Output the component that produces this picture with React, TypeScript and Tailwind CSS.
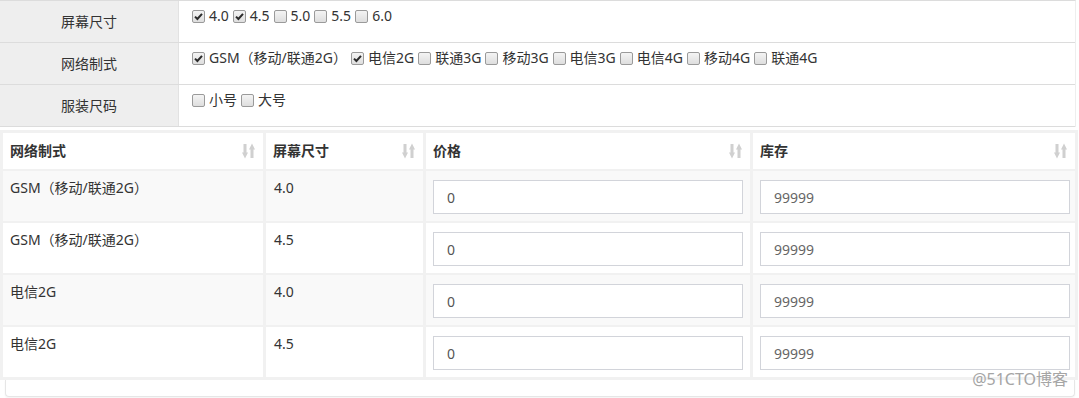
import React from "react";

const font = { fontFamily: '"Noto Sans", "Noto Sans CJK SC", sans-serif' };

function Box({ checked }: { checked?: boolean }) {
  return (
    <span className="inline-flex w-[13px] h-[13px] shrink-0 items-center justify-center rounded-[2px] border border-[#9a9a9a] bg-gradient-to-b from-[#f4f4f4] to-[#dedede]">
      {checked && (
        <svg width="9" height="9" viewBox="0 0 9 9">
          <path d="M1 4.6 L3.4 7 L8 1.8" fill="none" stroke="#2b2b2b" strokeWidth="2" />
        </svg>
      )}
    </span>
  );
}

function Item({ label, checked }: { label: string; checked?: boolean }) {
  return (
    <span className="inline-flex items-center gap-[4px] mr-[4px]">
      <Box checked={checked} />
      <span>{label}</span>
    </span>
  );
}

function SortIcon() {
  return (
    <svg width="13" height="16" viewBox="0 0 13 16" fill="#d0d0d0">
      <rect x="1.5" y="1" width="3" height="9.5" />
      <polygon points="0,9.5 6,9.5 3,15.5" />
      <polygon points="7,6.5 13,6.5 10,0.5" />
      <rect x="8.5" y="5.5" width="3" height="9.5" />
    </svg>
  );
}

const topRows: { label: string; items: [string, boolean][] }[] = [
  {
    label: "屏幕尺寸",
    items: [
      ["4.0", true],
      ["4.5", true],
      ["5.0", false],
      ["5.5", false],
      ["6.0", false],
    ],
  },
  {
    label: "网络制式",
    items: [
      ["GSM（移动/联通2G）", true],
      ["电信2G", true],
      ["联通3G", false],
      ["移动3G", false],
      ["电信3G", false],
      ["电信4G", false],
      ["移动4G", false],
      ["联通4G", false],
    ],
  },
  {
    label: "服装尺码",
    items: [
      ["小号", false],
      ["大号", false],
    ],
  },
];

const rows = [
  ["GSM（移动/联通2G）", "4.0"],
  ["GSM（移动/联通2G）", "4.5"],
  ["电信2G", "4.0"],
  ["电信2G", "4.5"],
];

export default function App() {
  return (
    <div
      className="relative w-[1079px] h-[398px] overflow-hidden bg-white text-[14px] text-[#333]"
      style={font}
    >
      {/* top spec table */}
      <div className="w-[1076px] border-t border-r border-[#dcdcdc] border-r-[#eeeeee]">
        {topRows.map((r) => (
          <div key={r.label} className="flex h-[42px] border-b border-[#dcdcdc]">
            <div className="w-[179px] shrink-0 bg-[#eeeeee] border-r border-[#e2e2e2] flex items-center justify-center leading-[20px]">
              {r.label}
            </div>
            <div className="flex-1 pl-[13px] pt-[5px] leading-[20px] flex items-start flex-wrap">
              {r.items.map(([l, c]) => (
                <Item key={l} label={l} checked={c} />
              ))}
            </div>
          </div>
        ))}
      </div>

      {/* sku table */}
      <div className="mt-[3px] w-[1078px] bg-[#f1f1f1] p-[3px] grid grid-cols-[260px_157px_324px_322px] gap-x-[3px] gap-y-[2px]">
        {["网络制式", "屏幕尺寸", "价格", "库存"].map((h) => (
          <div key={h} className="h-[36px] bg-white flex items-center justify-between pl-[7px] pr-[8px] font-bold leading-[20px]">
            <span>{h}</span>
            <SortIcon />
          </div>
        ))}
        {rows.map((r, i) => {
          const bg = i % 2 === 0 ? "bg-[#f9f9f9]" : "bg-white";
          return (
            <React.Fragment key={i}>
              <div className={`h-[50px] ${bg} pl-[7px] pt-[7px] leading-[20px]`}>{r[0]}</div>
              <div className={`h-[50px] ${bg} pl-[8px] pt-[7px] leading-[20px]`}>{r[1]}</div>
              <div className={`h-[50px] ${bg} px-[7px] pt-[9px]`}>
                <div className="h-[34px] w-[310px] border border-[#d2d4da] bg-white pl-[13px] flex items-center text-[#555]">
                  0
                </div>
              </div>
              <div className={`h-[50px] ${bg} px-[7px] pt-[9px]`}>
                <div className="h-[34px] w-[310px] border border-[#d2d4da] bg-white pl-[13px] flex items-center text-[#666]">
                  99999
                </div>
              </div>
            </React.Fragment>
          );
        })}
      </div>

      {/* panel bottom */}
      <div className="ml-[5px] w-[1070px] h-[17px] border border-t-0 border-[#e6e6e6] rounded-b-[4px] shadow-[0_1px_2px_rgba(0,0,0,0.05)]" />

      <div className="absolute right-[11px] top-[369px] text-[16px] leading-[20px] text-[#a5a5a5]">
        @51CTO博客
      </div>
    </div>
  );
}
